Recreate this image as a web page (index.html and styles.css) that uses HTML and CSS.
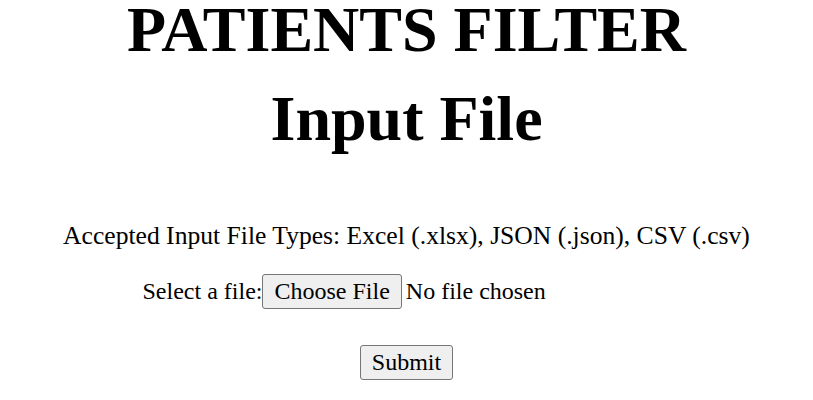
FILE: index.html
```html
<!DOCTYPE html>
<html lang="en">
<head>
<meta charset="utf-8">
<title>Patients Filter</title>
<link rel="stylesheet" href="styles.css">
</head>
<body>
<main class="page">
  <h1 class="title">PATIENTS FILTER</h1>
  <h2 class="subtitle">Input File</h2>
  <form class="upload">
    <p class="types">Accepted Input File Types: Excel (.xlsx), JSON (.json), CSV (.csv)</p>
    <div class="file-row">
      <label class="file-label" for="file">Select a file:</label><input class="file-input" type="file" id="file" name="file" accept=".xlsx,.json,.csv">
    </div>
    <div class="submit-row">
      <button class="btn" type="submit">Submit</button>
    </div>
  </form>
</main>
</body>
</html>
```

FILE: styles.css
```css
html, body {
  margin: 0;
  padding: 0;
  background: #ffffff;
}

body {
  font-family: "Liberation Serif", "Times New Roman", serif;
  color: #000000;
}

.page {
  text-align: center;
}

.title,
.subtitle {
  margin: 0;
  font-size: 64px;
  line-height: 59px;
  font-weight: bold;
}

.subtitle {
  margin-top: 30px;
}

.upload {
  margin: 0;
  font-size: 24px;
}

.types {
  margin: 73px 0 0 0;
  font-size: 25.6px;
  line-height: 29px;
}

.file-row {
  margin-top: 24px;
  display: flex;
  justify-content: center;
  align-items: center;
}

.file-label {
  line-height: 27px;
}

.file-input {
  font: inherit;
  width: 408px;
  text-align: left;
}

.file-input::file-selector-button,
.btn {
  font: inherit;
  line-height: 27px;
  padding: 3px 11px;
  border: 1px solid #767676;
  border-radius: 3px;
  background: #efefef;
  color: #000000;
}

.file-input::file-selector-button {
  margin-right: 4px;
}

.submit-row {
  margin-top: 36px;
}
```
